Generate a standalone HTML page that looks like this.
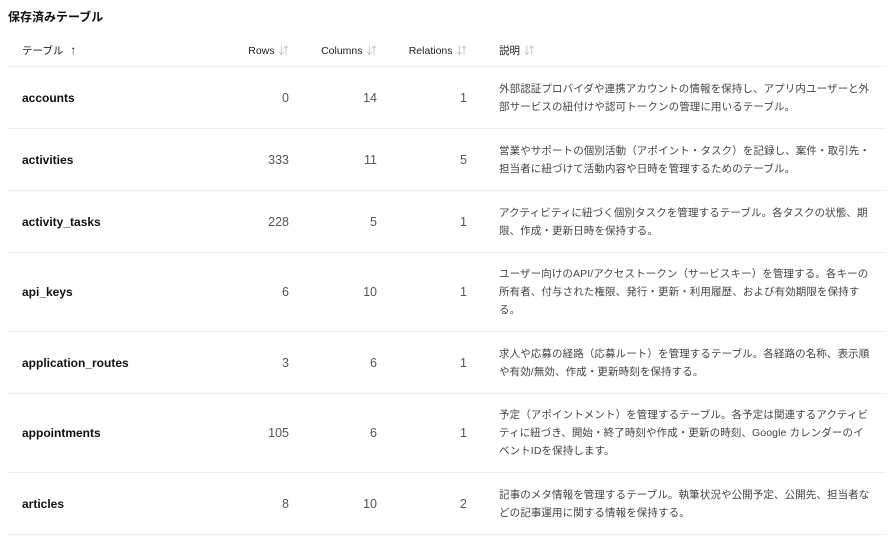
<!DOCTYPE html>
<html><head><meta charset="utf-8"><style>
body{margin:0;background:#fff;font-family:"Liberation Sans","Noto Sans CJK JP",sans-serif;color:#222;width:892px;height:546px;overflow:hidden}
h1{position:absolute;left:8px;top:9px;margin:0;font-size:12px;font-weight:bold;color:#111;line-height:16px}
table{position:absolute;left:8px;top:34px;width:878px;border-collapse:collapse;table-layout:fixed}
th{font-size:10.5px;font-weight:normal;color:#222;height:32px;padding:0;text-align:left}
th .a{color:#bbb;margin-left:4px;font-size:10.5px}
td{border-top:1px solid #eee;padding:0;font-size:12.5px;color:#555}
td.n{font-weight:bold;color:#111;padding-left:14px;font-size:12px}
th.n{padding-left:14px}
.r{text-align:right}
td.d,th.d{padding-left:32px}
td.d{font-size:10.5px;line-height:18px;color:#444;white-space:nowrap;letter-spacing:0.1px}
tr.b td{border-bottom:1px solid #eee}
</style></head><body>
<h1>保存済みテーブル</h1>
<table>
<colgroup><col style="width:200px"><col style="width:81px"><col style="width:88px"><col style="width:90px"><col></colgroup>
<tr><th class="n">テーブル <span style="margin-left:4px;font-size:12px">↑</span></th><th class="r">Rows<span class="a">⇵</span></th><th class="r">Columns<span class="a">⇵</span></th><th class="r">Relations<span class="a">⇵</span></th><th class="d">説明<span class="a">⇵</span></th></tr>
<tr style="height:62px"><td class="n">accounts</td><td class="r">0</td><td class="r">14</td><td class="r">1</td><td class="d">外部認証プロバイダや連携アカウントの情報を保持し、アプリ内ユーザーと外<br>部サービスの紐付けや認可トークンの管理に用いるテーブル。</td></tr>
<tr style="height:62px"><td class="n">activities</td><td class="r">333</td><td class="r">11</td><td class="r">5</td><td class="d">営業やサポートの個別活動（アポイント・タスク）を記録し、案件・取引先・<br>担当者に紐づけて活動内容や日時を管理するためのテーブル。</td></tr>
<tr style="height:62px"><td class="n">activity_tasks</td><td class="r">228</td><td class="r">5</td><td class="r">1</td><td class="d">アクティビティに紐づく個別タスクを管理するテーブル。各タスクの状態、期<br>限、作成・更新日時を保持する。</td></tr>
<tr style="height:79px"><td class="n">api_keys</td><td class="r">6</td><td class="r">10</td><td class="r">1</td><td class="d">ユーザー向けのAPI/アクセストークン（サービスキー）を管理する。各キーの<br>所有者、付与された権限、発行・更新・利用履歴、および有効期限を保持す<br>る。</td></tr>
<tr style="height:62px"><td class="n">application_routes</td><td class="r">3</td><td class="r">6</td><td class="r">1</td><td class="d">求人や応募の経路（応募ルート）を管理するテーブル。各経路の名称、表示順<br>や有効/無効、作成・更新時刻を保持する。</td></tr>
<tr style="height:79px"><td class="n">appointments</td><td class="r">105</td><td class="r">6</td><td class="r">1</td><td class="d">予定（アポイントメント）を管理するテーブル。各予定は関連するアクティビ<br>ティに紐づき、開始・終了時刻や作成・更新の時刻、Google カレンダーのイ<br>ベントIDを保持します。</td></tr>
<tr class="b" style="height:62px"><td class="n">articles</td><td class="r">8</td><td class="r">10</td><td class="r">2</td><td class="d">記事のメタ情報を管理するテーブル。執筆状況や公開予定、公開先、担当者な<br>どの記事運用に関する情報を保持する。</td></tr>
</table>
</body></html>
